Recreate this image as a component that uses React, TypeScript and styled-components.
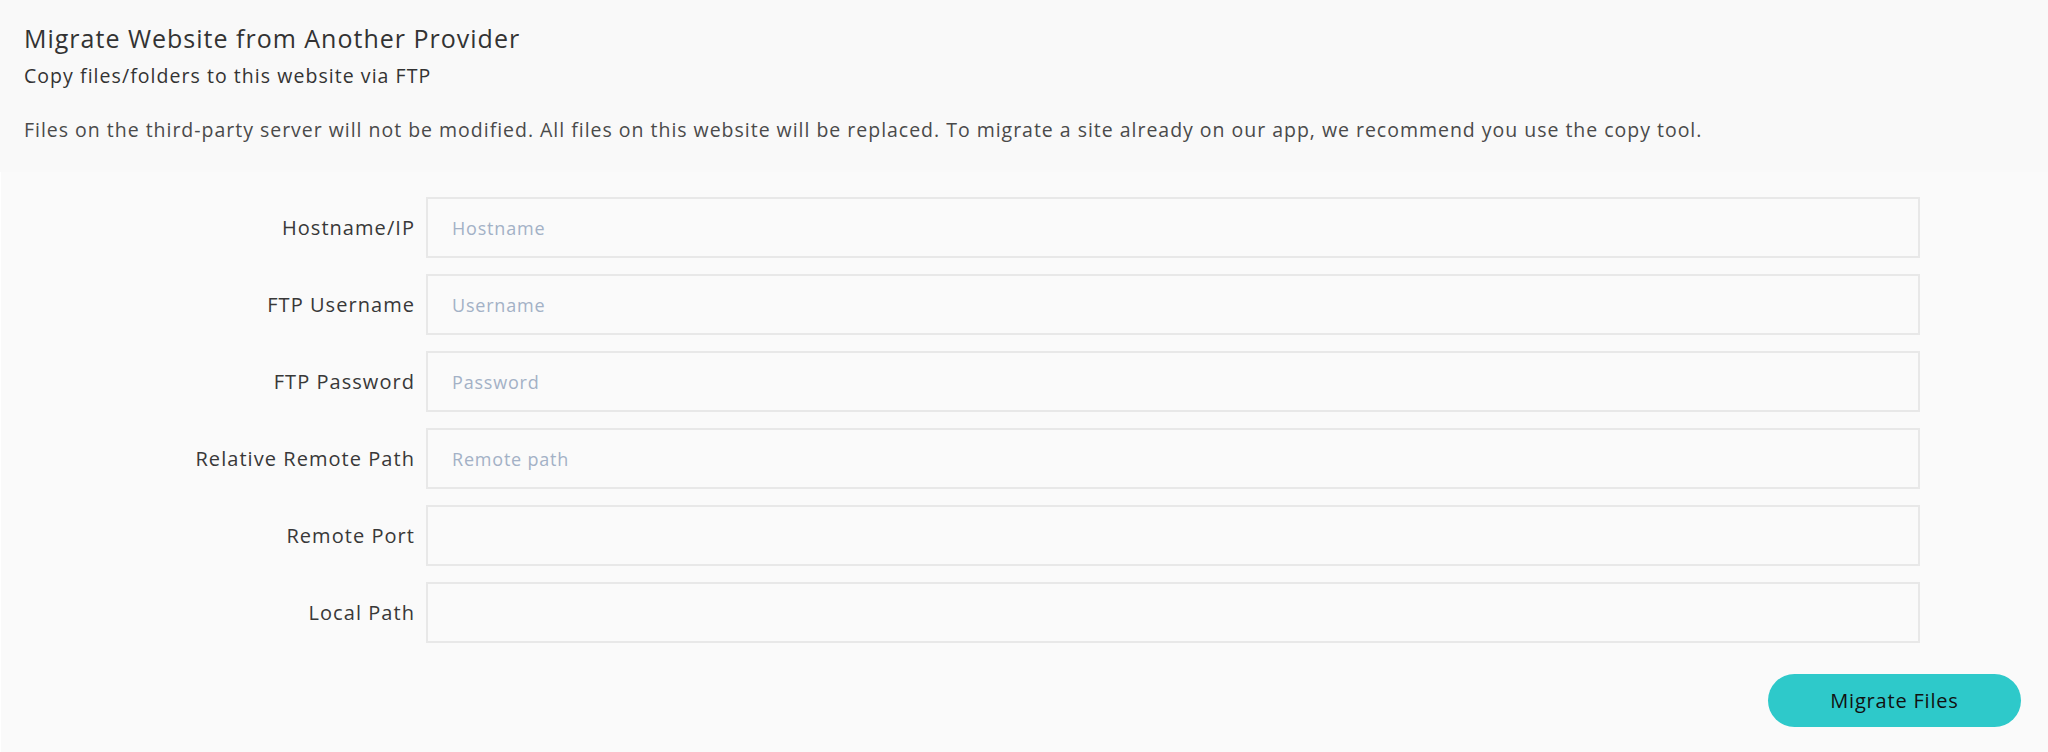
import styled, { createGlobalStyle } from "styled-components";

const GlobalStyle = createGlobalStyle`
  body {
    margin: 0;
    background: #f9f9f9;
    font-family: "Open Sans", "Liberation Sans", sans-serif;
    color: #333;
  }
`;

const fields = [
  { label: "Hostname/IP", placeholder: "Hostname" },
  { label: "FTP Username", placeholder: "Username" },
  { label: "FTP Password", placeholder: "Password" },
  { label: "Relative Remote Path", placeholder: "Remote path" },
  { label: "Remote Port", placeholder: "" },
  { label: "Local Path", placeholder: "" },
];

export default function App() {
  return (
    <>
      <GlobalStyle />
      <Page>
        <Header>
          <Title>Migrate Website from Another Provider</Title>
          <Subtitle>Copy files/folders to this website via FTP</Subtitle>
          <Note>
            Files on the third-party server will not be modified. All files on this website will be replaced. To migrate a site already on our app, we recommend you use the copy tool.
          </Note>
        </Header>
        <Panel>
          <Form>
            {fields.map((f) => (
              <Row key={f.label}>
                <Label>{f.label}</Label>
                <Input placeholder={f.placeholder} />
              </Row>
            ))}
          </Form>
          <Actions>
            <SubmitButton>Migrate Files</SubmitButton>
          </Actions>
        </Panel>
      </Page>
    </>
  );
}

const Page = styled.div`
  width: 2048px;
  min-height: 752px;
  display: flex;
  flex-direction: column;
`;

const Header = styled.div`
  padding: 22px 24px 0 24px;
  display: flex;
  flex-direction: column;
`;

const Title = styled.h1`
  margin: 0;
  font-size: 25px;
  line-height: 32px;
  font-weight: 400;
  letter-spacing: 1px;
  color: #333;
`;

const Subtitle = styled.h2`
  margin: 8px 0 0 0;
  font-size: 19.5px;
  line-height: 28px;
  font-weight: 400;
  letter-spacing: 1.05px;
  color: #333;
`;

const Note = styled.p`
  margin: 27px 0 0 0;
  font-size: 19.5px;
  line-height: 26px;
  font-weight: 400;
  letter-spacing: 0.98px;
  color: #4a4a4a;
`;

const Panel = styled.div`
  margin-top: 29px;
  flex: 1;
  background: #fafafa;
  border-left: 1px solid #ffffff;
  padding: 25px 0 25px 0;
  display: flex;
  flex-direction: column;
`;

const Form = styled.div`
  display: flex;
  flex-direction: column;
  gap: 16px;
`;

const Row = styled.div`
  display: grid;
  grid-template-columns: 414px 1494px;
  column-gap: 11px;
  align-items: center;
`;

const Label = styled.label`
  text-align: right;
  font-size: 20px;
  font-weight: 400;
  letter-spacing: 1.05px;
  color: #383838;
`;

const Input = styled.input`
  box-sizing: border-box;
  height: 61px;
  width: 100%;
  border: 2px solid #e8e8e8;
  background: #fafafa;
  padding: 0 24px;
  font-family: "Open Sans", "Liberation Sans", sans-serif;
  font-size: 18px;
  color: #333;
  outline: none;

  &::placeholder {
    color: #a3b1c6;
    letter-spacing: 0.8px;
  }
`;

const Actions = styled.div`
  display: flex;
  justify-content: flex-end;
  padding-right: 27px;
  margin-top: 31px;
`;

const SubmitButton = styled.button`
  width: 253px;
  height: 53px;
  border: none;
  border-radius: 27px;
  background: #2ec9ca;
  color: #111;
  font-family: "Open Sans", "Liberation Sans", sans-serif;
  font-size: 20px;
  letter-spacing: 0.8px;
  cursor: pointer;
`;
